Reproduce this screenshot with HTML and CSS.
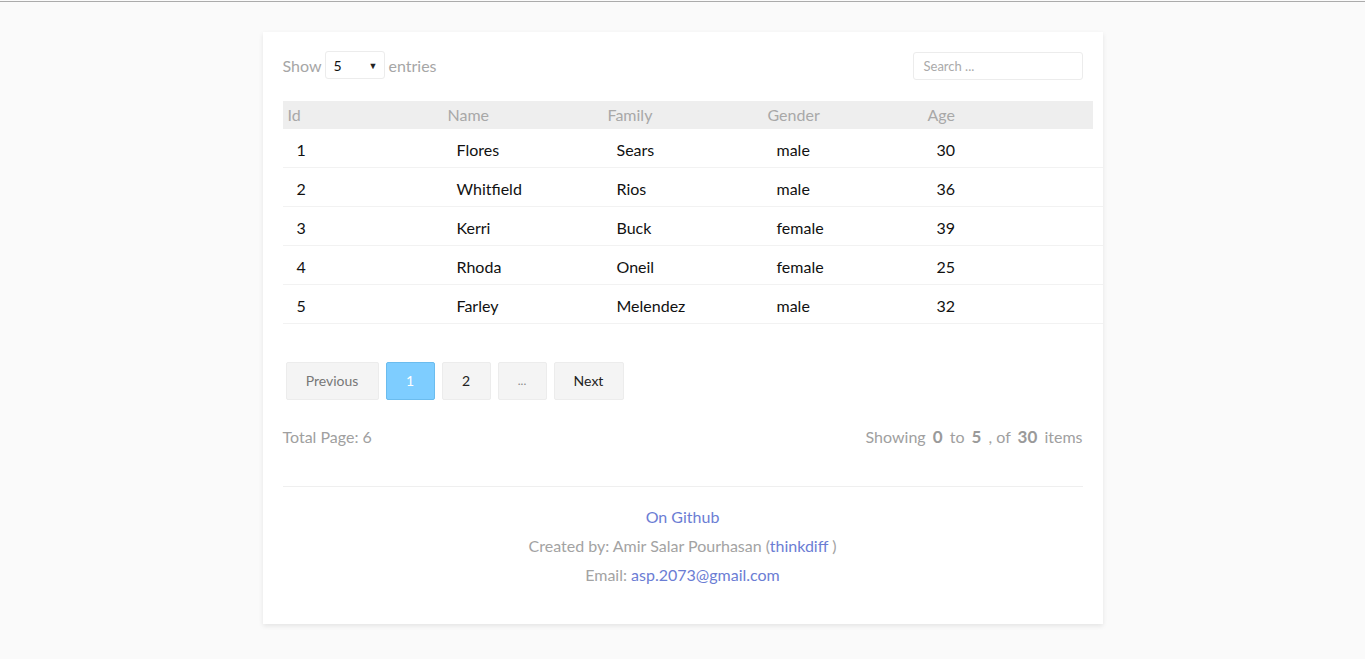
FILE: index.html
```html
<!DOCTYPE html>
<html>
<head>
<meta charset="utf-8">
<link rel="stylesheet" href="styles.css">
</head>
<body>
<div class="topline"></div>
<div class="card">
  <div class="controls">
    <div class="show">Show <span class="select"><span>5</span><span class="caret">&#9660;</span></span> entries</div>
    <div class="search">Search ...</div>
  </div>
  <div class="table">
    <div class="thead">
      <div>Id</div><div>Name</div><div>Family</div><div>Gender</div><div>Age</div>
    </div>
    <div class="row"><div>1</div><div>Flores</div><div>Sears</div><div>male</div><div>30</div></div>
    <div class="row"><div>2</div><div>Whitfield</div><div>Rios</div><div>male</div><div>36</div></div>
    <div class="row"><div>3</div><div>Kerri</div><div>Buck</div><div>female</div><div>39</div></div>
    <div class="row"><div>4</div><div>Rhoda</div><div>Oneil</div><div>female</div><div>25</div></div>
    <div class="row"><div>5</div><div>Farley</div><div>Melendez</div><div>male</div><div>32</div></div>
  </div>
  <div class="pager">
    <div class="btn prev">Previous</div>
    <div class="btn num active">1</div>
    <div class="btn num">2</div>
    <div class="btn num dots">...</div>
    <div class="btn next">Next</div>
  </div>
  <div class="summary">
    <div>Total Page: 6</div>
    <div>Showing <b>0</b> to <b>5</b> , of <b>30</b> items</div>
  </div>
  <div class="footer">
    <div><a>On Github</a></div>
    <div>Created by: Amir Salar Pourhasan (<a>thinkdiff</a> )</div>
    <div>Email: <a>asp.2073@gmail.com</a></div>
  </div>
</div>
</body>
</html>
```
FILE: styles.css
```css
html, body { margin: 0; padding: 0; }
body {
  background: #fafafa;
  font-family: Lato, "Open Sans", sans-serif;
  color: #999;
  font-size: 16px;
  height: 659px;
  overflow: hidden;
}
.topline { height: 1px; background: #ababab; margin-top: 1px; }
.card {
  width: 800px;
  margin: 30px auto 0;
  background: #fff;
  padding: 20px 20px 35px;
  box-shadow: 0 2px 5px rgba(0,0,0,0.09);
}
.controls {
  display: flex;
  justify-content: space-between;
  align-items: flex-start;
  height: 28px;
}
.show { display: flex; align-items: center; height: 28px; margin-top: -1px; color: #a6a6a6; }
.select {
  display: inline-flex;
  align-items: center;
  justify-content: space-between;
  height: 26px;
  border: 1px solid #ececec;
  border-radius: 3px;
  margin: 0 4px 0 3px;
  padding: 0 6px 0 8px;
  box-sizing: content-box;
  color: #111;
  font-size: 14px;
  width: 44px;
}
.caret { font-size: 9px; color: #222; }
.search {
  width: 158px;
  height: 26px;
  border: 1px solid #ececec;
  border-radius: 3px;
  padding-left: 10px;
  font-size: 13px;
  color: #aaa;
  line-height: 26px;
}
.table { margin-top: 21px; width: 820px; }
.thead {
  display: grid;
  grid-template-columns: repeat(5, 160px);
  width: 810px;
  height: 28px;
  line-height: 28px;
  background: #eeeeee;
  color: #a8a8a8;
}
.thead div { padding-left: 5px; }
.row {
  display: grid;
  grid-template-columns: repeat(5, 160px);
  height: 38px;
  line-height: 42px;
  border-bottom: 1px solid #f2f2f2;
  color: #111;
}
.row div { padding-left: 14px; }
.pager { display: flex; gap: 7px; margin: 38px 0 0 3px; }
.btn {
  height: 36px;
  line-height: 36px;
  border: 1px solid #ececec;
  border-radius: 2px;
  background: #f4f4f4;
  text-align: center;
  font-size: 14px;
  color: #222;
}
.prev { width: 91px; color: #777; }
.num { width: 47px; }
.dots { color: #888; font-size: 12px; }
.next { width: 68px; }
.active { background: #7ecdff; border-color: #6bbcee; color: #fff; }
.summary {
  display: flex;
  justify-content: space-between;
  margin-top: 26px;
  line-height: 22px;
  color: #a0a0a0;
}
.summary b { font-size: 17px; color: #9a9a9a; margin: 0 3px; }
.footer {
  margin-top: 38px;
  border-top: 1px solid #efefef;
  padding-top: 15px;
  text-align: center;
  line-height: 29px;
  color: #a3a3a3;
}
.footer a { color: #6b7dd4; }
```
